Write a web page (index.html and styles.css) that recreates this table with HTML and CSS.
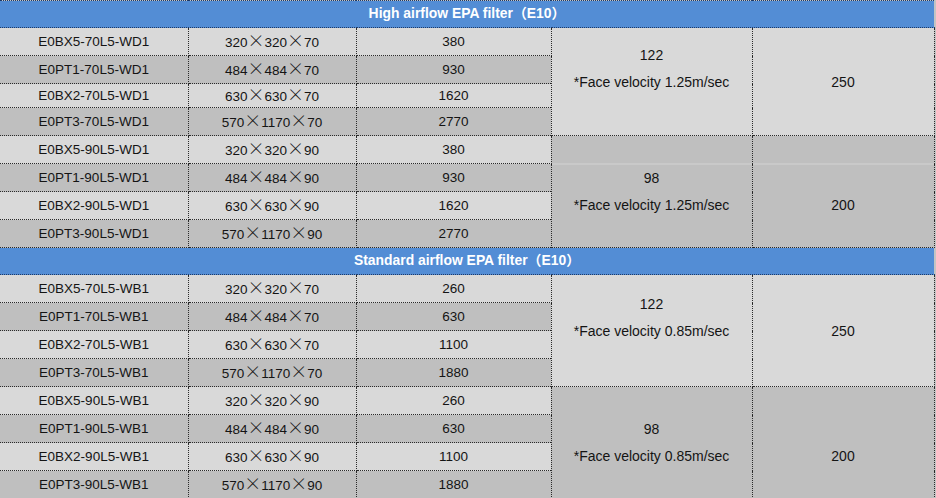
FILE: index.html
```html
<!DOCTYPE html>
<html>
<head>
<meta charset="utf-8">
<link rel="stylesheet" href="styles.css">
</head>
<body>
<table class="spec">
  <colgroup>
    <col class="c1"><col class="c2"><col class="c3"><col class="c4"><col class="c5">
  </colgroup>
  <tbody>
    <tr class="head"><td colspan="5">High airflow EPA filter（E10）</td></tr>
    <tr class="row lt">
      <td>E0BX5-70L5-WD1</td><td>320<span class="x">×</span>320<span class="x">×</span>70</td><td>380</td>
      <td rowspan="4" class="merge note lt"><div class="l1">122</div><div class="l2">*Face velocity 1.25m/sec</div></td>
      <td rowspan="4" class="merge lt">250</td>
    </tr>
    <tr class="row dk"><td>E0PT1-70L5-WD1</td><td>484<span class="x">×</span>484<span class="x">×</span>70</td><td>930</td></tr>
    <tr class="row lt short"><td>E0BX2-70L5-WD1</td><td>630<span class="x">×</span>630<span class="x">×</span>70</td><td>1620</td></tr>
    <tr class="row dk"><td>E0PT3-70L5-WD1</td><td>570<span class="x">×</span>1170<span class="x">×</span>70</td><td>2770</td></tr>
    <tr class="row lt">
      <td>E0BX5-90L5-WD1</td><td>320<span class="x">×</span>320<span class="x">×</span>90</td><td>380</td>
      <td rowspan="4" class="merge note low seam dk"><div class="l1">98</div><div class="l2">*Face velocity 1.25m/sec</div></td>
      <td rowspan="4" class="merge low seam dk">200</td>
    </tr>
    <tr class="row dk"><td>E0PT1-90L5-WD1</td><td>484<span class="x">×</span>484<span class="x">×</span>90</td><td>930</td></tr>
    <tr class="row lt"><td>E0BX2-90L5-WD1</td><td>630<span class="x">×</span>630<span class="x">×</span>90</td><td>1620</td></tr>
    <tr class="row dk"><td>E0PT3-90L5-WD1</td><td>570<span class="x">×</span>1170<span class="x">×</span>90</td><td>2770</td></tr>

    <tr class="head"><td colspan="5">Standard airflow EPA filter（E10）</td></tr>
    <tr class="row lt">
      <td>E0BX5-70L5-WB1</td><td>320<span class="x">×</span>320<span class="x">×</span>70</td><td>260</td>
      <td rowspan="4" class="merge note lt"><div class="l1">122</div><div class="l2">*Face velocity 0.85m/sec</div></td>
      <td rowspan="4" class="merge lt">250</td>
    </tr>
    <tr class="row dk"><td>E0PT1-70L5-WB1</td><td>484<span class="x">×</span>484<span class="x">×</span>70</td><td>630</td></tr>
    <tr class="row lt"><td>E0BX2-70L5-WB1</td><td>630<span class="x">×</span>630<span class="x">×</span>70</td><td>1100</td></tr>
    <tr class="row dk"><td>E0PT3-70L5-WB1</td><td>570<span class="x">×</span>1170<span class="x">×</span>70</td><td>1880</td></tr>
    <tr class="row lt">
      <td>E0BX5-90L5-WB1</td><td>320<span class="x">×</span>320<span class="x">×</span>90</td><td>260</td>
      <td rowspan="4" class="merge note low dk"><div class="l1">98</div><div class="l2">*Face velocity 0.85m/sec</div></td>
      <td rowspan="4" class="merge low dk">200</td>
    </tr>
    <tr class="row dk"><td>E0PT1-90L5-WB1</td><td>484<span class="x">×</span>484<span class="x">×</span>90</td><td>630</td></tr>
    <tr class="row lt"><td>E0BX2-90L5-WB1</td><td>630<span class="x">×</span>630<span class="x">×</span>90</td><td>1100</td></tr>
    <tr class="row dk"><td>E0PT3-90L5-WB1</td><td>570<span class="x">×</span>1170<span class="x">×</span>90</td><td>1880</td></tr>
  </tbody>
</table>
</body>
</html>
```

FILE: styles.css
```css
html, body {
  margin: 0;
  padding: 0;
  background: #c4c4c4;
}

.spec {
  width: 934px;
  border-collapse: collapse;
  table-layout: fixed;
  font-family: "Liberation Sans", "Noto Sans CJK SC", sans-serif;
  font-size: 13.5px;
  line-height: 16px;
  color: #141414;
}

.c1 { width: 188px; }
.c2 { width: 168px; }
.c3 { width: 195px; }
.c4 { width: 201px; }
.c5 { width: 182px; }

.spec td {
  border: 1px dotted #2a2a2a;
  text-align: center;
  vertical-align: middle;
  padding: 0;
  white-space: nowrap;
}

.head { height: 27px; }

.head td {
  padding-bottom: 2px;
  background: #538dd5;
  color: #ffffff;
  font-weight: bold;
  font-size: 13.9px;
  border-color: #1f3a66;
  border-left: none;
  border-right: none;
}

.row { height: 28px; }
.row.short { height: 24px; }

.row.lt td { background: #d9d9d9; }
.row.dk td { background: #bfbfbf; }

.spec td.merge.lt { background: #d9d9d9; }
.spec td.merge.dk { background: #bfbfbf; }

.spec td.merge.seam {
  background: linear-gradient(to bottom, #bfbfbf 27px, #d2d2d2 27px, #d2d2d2 28px, #bfbfbf 28px);
}

.spec td.merge { font-size: 14px; }
.spec td.note { padding-bottom: 27px; }
.spec td.low { padding-top: 27px; }
.spec td.note.low { padding-top: 27px; padding-bottom: 27px; }
.spec td.merge.low:not(.note) { padding-top: 27px; }
.note .l1 { margin-bottom: 11px; }
.note.low .l1 { margin-bottom: 11px; }

.x {
  display: inline-block;
  width: 17px;
  text-align: center;
  font-family: "Noto Sans CJK SC", sans-serif;
  font-weight: 300;
  font-size: 17px;
  line-height: 14px;
  vertical-align: 0;
}

.spec tr td:first-child { border-left: none; }
```
